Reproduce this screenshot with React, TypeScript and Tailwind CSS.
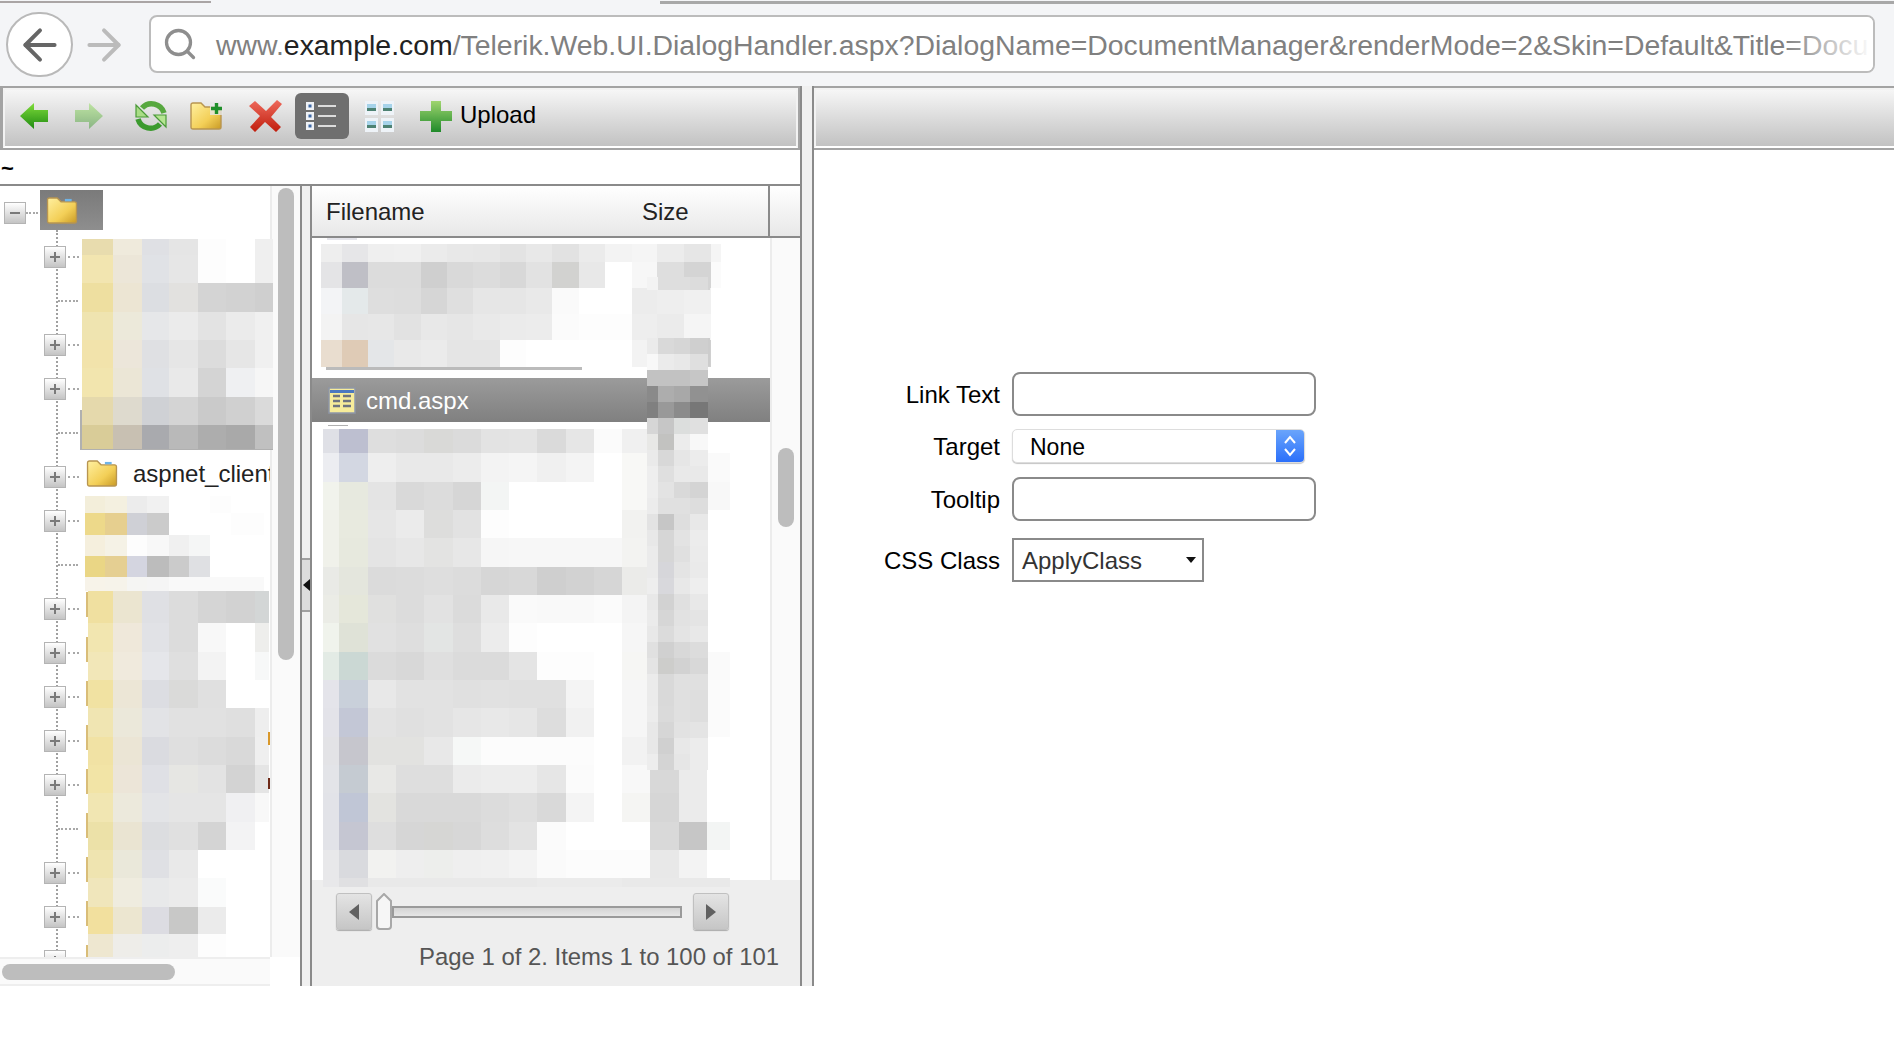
import { ArrowLeft, ArrowRight, Search } from 'lucide-react';
import type { ReactNode } from 'react';

interface MosaicProps {
  cols: number[];
  rows: number[];
  colors: string[];
}

// each colors entry is one row of space separated hex values
function Mosaic({ cols, rows, colors }: MosaicProps) {
  return (
    <div className="flex flex-col shrink-0">
      {rows.map((h, r) => {
        const line = colors[r].split(' ');
        return (
          <div key={r} className="flex">
            {cols.map((w, c) => (
              <div key={c} style={{ width: w, height: h, backgroundColor: '#' + line[c] }} />
            ))}
          </div>
        );
      })}
    </div>
  );
}

const tree1 = {
  cols: [31, 29, 27, 29, 28, 29, 18],
  rows: [16, 28, 29, 28, 28, 29, 28, 24],
  colors: [
    'e8dcae efeadc dfe0e4 e5e5e5 fdfdfd ffffff efefef',
    'f2e5b0 ece6d8 e0e2e6 e6e6e6 fdfdfd ffffff efefef',
    'eedfa0 ece5d3 dcdee2 e2e1df d4d4d4 d2d2d2 cfcfcf',
    'efe4b0 ece9da e6e7e9 ebebeb e3e3e3 ebebeb f0f0f0',
    'f2e3ab ece6da dfe0e3 e6e6e6 dcdcdc e6e6e6 f0f0f0',
    'f2e5ae ebe6d6 dfe1e5 e9e9e9 d4d4d4 eff0f2 f6f6f6',
    'e5d9ac dedace cfd1d5 d4d4d4 cacaca d0d0d0 dadada',
    'd9cc98 c8c0b2 a9aaae b9b9b9 adadad a9a9a9 c0c0c0',
  ],
};

const tree2 = {
  cols: [20, 22, 20, 22, 20, 21, 21, 33],
  rows: [17, 22, 21, 21, 14],
  colors: [
    'f3eeda f4f0e0 ececec f1f1f1 ffffff ffffff fdfdfd ffffff',
    'edd98a e6cf8f cfd0d6 cbcbcb ffffff ffffff ffffff fdfdfd',
    'f5efdd f5f2e6 fdfdfd f8f8f8 f0f0f0 f5f6f6 ffffff ffffff',
    'ead685 e5cf92 d4d5e0 bcbcbc cbcbcb dfe0e3 ffffff ffffff',
    'f7f3e9 f6f3ea f5f5f3 f5f5f5 f9f9f9 f9f9f9 f9f9f9 f9f9f9',
  ],
};

const tree3 = {
  cols: [25, 29, 27, 29, 28, 29, 14],
  rows: [32, 29, 28, 28, 29, 28, 28, 29, 28, 28, 29, 27, 24],
  colors: [
    'f0e0a0 ebe5d0 dfe0e4 dcdcdc d5d5d5 d2d2d2 d3d6d6',
    'f2e6b0 efe8da e1e2e6 dcdcdc f8f8f8 ffffff eeeeec',
    'f2e7b8 f0eadd e5e6ea dfdfdf f3f3f3 ffffff f7f8f8',
    'f1e2a2 ece6d6 dcdde2 dadad9 e0e0e0 ffffff ffffff',
    'f0e5b2 ebe8da e2e3e6 e1e1e1 e1e1e1 dfdfdf eeeeee',
    'f1e2a4 ebe5d5 dadbe0 dfdfdf dcdcdc d9d9d9 efefef',
    'f2e4a6 ece5d8 dfe0e5 e6e6e3 e3e3e3 d3d3d3 e5e5e5',
    'f1e6b2 ece9dc e3e4e7 e5e5e5 e5e5e5 f0f0f2 f8f8f8',
    'ece1a8 eae4d2 dcdde0 e0e0e0 d4d4d4 f3f3f4 ffffff',
    'efe4b0 eae8da dfe0e4 e9e9e9 ffffff ffffff ffffff',
    'f0e6bb efecdf e8e9ea ebebeb fafbfb ffffff ffffff',
    'f2e09e ece6d0 dcdce2 c8c8c7 ebebeb ffffff ffffff',
    'eee7d0 eeede9 ecedEd eeeeee fdfdfd ffffff ffffff',
  ],
};

const files1 = {
  cols: [21, 26, 26, 27, 26, 26, 27, 26, 26, 27, 26, 27, 25, 27, 27, 10],
  rows: [18, 26, 26, 26, 27],
  colors: [
    'eeeeee e6e6e8 efefef f0f0f0 ebebeb e8e8e8 e7e7e7 e3e3e3 e8e8e8 e2e2e2 ebebeb f3f3f3 f5f5f5 ececec e6e6e6 f5f5f5',
    'e4e4e6 bfbfc6 dcdcdc dcdcdc cfcfcf d9d9d9 dcdcdc d8d8d8 e2e2e2 d2d2d0 e8e8e8 ffffff f7f7f7 dedede d4d4d4 fbfbfb',
    'f3f4f6 e4e9ea dedede dddddd d6d6d6 dfdfdf e6e6e6 e6e6e6 e9e9e9 fafafa ffffff ffffff ececec eeeeee f0f0f0 ffffff',
    'f3f3f3 e6e6e6 e7e7e7 e2e2e2 e8e8e8 e6e6e6 e9e9e9 ebebeb ececec fbfbfb fdfdfd fdfdfd eeeeee ebebeb f5f5f5 ffffff',
    'e9ddcf dfcbb6 e4e6e8 e9e9e9 ebebeb e5e5e5 e5e5e5 fdfdfd ffffff ffffff ffffff ffffff f3f3f3 e0e0e0 d0d0d0 ffffff',
  ],
};

const files2 = {
  cols: [16, 29, 28, 28, 29, 28, 28, 28, 29, 28, 28, 28, 29, 28, 23],
  rows: [24, 29, 28, 28, 29, 28, 28, 29, 28, 28, 29, 28, 28, 29, 28, 28, 9],
  colors: [
    'dfe0e6 bdbfd0 dedede dcdcdc d9d9d7 dbdbdb e3e3e3 e4e4e4 dadada e6e6e6 fbfbfb f0f0f0 f0f0f0 f0f0f0 ffffff',
    'ecedf1 d3d7e2 eeeeee e9e9e9 e9e9e9 ececec f3f3f3 f5f5f5 f0f0f0 f4f4f4 ffffff f8f8f6 f0f0f0 f0f0f0 fafafa',
    'f1f3ec e7e9df e4e4e4 d9d9d9 dcdcdc d6d6d6 f3f5f4 ffffff ffffff ffffff ffffff f8f8f6 e0e0e0 e0e0e0 f8f8f8',
    'f0f1ea e8eadf e6e6e6 ebebeb dddddc e2e2e2 fdfdfd ffffff ffffff ffffff ffffff f2f2f0 e0e0e0 e0e0e0 ffffff',
    'f0f1ea e7e9de e4e4e4 e7e7e7 e3e3e2 e7e7e7 f6f6f6 f7f7f7 f7f7f7 f7f7f7 f7f7f7 f3f3f1 e0e0e0 e0e0e0 ffffff',
    'e9eae6 e4e6dd dbdbdb dcdcdc dedede dcdcdc d6d6d6 d8d8d8 cfcfcf d2d2d2 d6d6d6 ebebe9 e0e0e0 e0e0e0 ffffff',
    'ebece6 e5e7da e0e0df dcdcdc e2e2e2 dbdbdb e9e9e9 fafafa f9f9f9 f9f9f9 fbfbfb f4f4f4 e0e0e0 e0e0e0 ffffff',
    'f0f3ec dfe2d7 e1e1e1 dedede e3e5e4 dedede ececec fdfdfd ffffff ffffff ffffff f6f6f6 e0e0e0 e0e0e0 ffffff',
    'e3ebe5 cbd8d4 dbdbdb d8d8d8 dfdfdf dbdbdb dbdbdb e4e4e4 fdfdfd fdfdfd ffffff f6f6f4 e0e0e0 e0e0e0 fafafa',
    'e4e4ea c9d0da e8e8e8 e2e2e2 e2e2e2 e0e0e0 e1e1e1 e0e0e0 e0e0e0 f4f4f4 ffffff f6f6f6 e0e0e0 e0e0e0 fbfbfb',
    'e3e3e9 c3c7d6 e3e3e3 e0e0e0 e2e2e2 e6e6e6 e8e8e8 e6e6e6 dddddd f1f1f1 ffffff f6f6f6 e0e0e0 e0e0e0 fbfbfb',
    'e3e3e6 c6c6cd e2e2e0 e2e2e0 e8e8e8 f6f8f7 fcfcfc fcfcfc fcfcfc fcfcfc ffffff f2f2f2 e0e0e0 e0e0e0 ffffff',
    'e3e4e8 c5cbd2 e8e8e6 dedede dedede ebebeb ededed ededed e6e6e6 fbfbfb ffffff f8f8f8 d8d8d8 ebebeb ffffff',
    'e2e3e8 c0c6d6 e3e3e0 d9d9d9 d9d9d9 d9d9d9 dcdcdc dfdfdf d9d9d9 f4f4f4 ffffff f5f5f3 d6d6d6 ebebeb ffffff',
    'e2e3e8 c5c6d2 dedede d6d6d6 d6d6d4 d7d7d7 dddddd e3e3e3 fbfbfb ffffff ffffff ffffff d9d9d9 c6c6c6 f3f5f4',
    'e8e8ea d9dade f2f2f0 eeeeee edeeec efefef f0f0f0 f3f3f3 fafafa fcfcfc fcfcfc fcfcfc e8e8e8 f3f3f3 ffffff',
    'e8e8ea e0e0e2 e9e9e9 e9e9e9 e9e9e9 e9e9e9 e9e9e9 e9e9e9 ebebeb ebebeb ebebeb e9e9e9 e9e9e9 e9e9e9 e9e9e9',
  ],
};

const sizeTop = ['f3f3f3 dedede dedede dcdcdc'];

const sizeCol = [
  'ebebeb d9d9d9 d6d6d6 cfcfcf',
  'f8f8f8 ebebeb e8e8e8 dfdfdf',
  'c2c2c2 c2c2c2 c2c2c2 c6c6c6',
  '8a8a8a adadad a8a8a8 919191',
  '808080 999999 8b8b8b 777777',
  'd6d6d6 c6c6c6 dcdedd e0e0e0',
  'e8e8e6 c2c2c0 ececec f8f8f8',
  'eaeaea d8d8d8 e6e6e6 ececec',
  'eeeeee dfdfdf e9e9e9 e9e9e9',
  'eeeeee e3e3e3 d9d9d9 d4d4d4',
  'ececec e0e0e0 e0e0e0 dddddd',
  'e3e3e3 c6c6c6 dedede e8e8e8',
  'e8e8e8 d6d6d6 e3e3e3 ececec',
  'ebebeb d6d6d6 e0e0e0 ebebeb',
  'ebebeb d6d6da e4e4e4 eaeaea',
  'eeeeee d8d8dc e8e8e8 eeeeee',
  'e8e8e8 d2d2d2 e0e0e0 e8e8e8',
  'ebebeb d6d6d6 e2e2e2 e4e4e4',
  'e8e8e8 dbdbdb e4e4e4 e8e8e8',
  'e0e0e0 d0d0d0 d8d8d8 dcdcdc',
  'e4e4e4 cdcdcb d2d2d2 d8d8d8',
  'ebebeb d9d9d9 e0e0e0 e0e0e0',
  'ebebeb d9d9d9 e0e0e0 dedede',
  'ececec dadada e0e0e0 dedede',
  'e8e8e8 d6d6d6 e2e2e2 e4e4e4',
  'e8e8e8 d0d0d0 e8e8e8 ececec',
  'ededed d4d4d4 e6e6e6 ececec',
];

const sizeCols = [11, 16, 16, 18];

// tops of the folder edges that peek out left of the third blurred block
const folderEdges = [1, 46, 90, 134, 178, 222, 266, 310, 354];

function GreenArrow({ flip }: { flip?: boolean }) {
  const id = flip ? 'arrowB' : 'arrowA';
  return (
    <svg width="28" height="26" viewBox="0 0 28 26" className={`blur-[0.6px] ${flip ? 'opacity-40 -scale-x-100' : ''}`}>
      <defs>
        <linearGradient id={id} x1="0" y1="0" x2="0" y2="1">
          <stop offset="0" stopColor="#7fdc3a" />
          <stop offset="1" stopColor="#1f8a12" />
        </linearGradient>
      </defs>
      <path d="M0 13 L14 0 V7 H28 V19 H14 V26 Z" fill={`url(#${id})`} />
    </svg>
  );
}

function RefreshIcon() {
  return (
    <svg width="32" height="32" viewBox="0 0 32 32" className="blur-[0.6px]">
      <path d="M7 8 A13 13 0 0 1 29 13" fill="none" stroke="#57a83f" strokeWidth="5.5" />
      <path d="M25 24 A13 13 0 0 1 3 19" fill="none" stroke="#3b9a2e" strokeWidth="5.5" />
      <path d="M1 5 V17 H13 Z" fill="#a9dd86" stroke="#4a9a38" strokeWidth="1.2" />
      <path d="M31 27 V15 H19 Z" fill="#b5e592" stroke="#4a9a38" strokeWidth="1.2" />
    </svg>
  );
}

function FolderShape({ id }: { id: string }) {
  return (
    <>
      <defs>
        <linearGradient id={id} x1="0" y1="0" x2="1" y2="1">
          <stop offset="0" stopColor="#fff0a0" />
          <stop offset="0.6" stopColor="#f3cf57" />
          <stop offset="1" stopColor="#c99a25" />
        </linearGradient>
      </defs>
      <path d="M1 3 Q1 1 3 1 H11 L15 5 H29 Q31 5 31 7 V25 Q31 27 29 27 H3 Q1 27 1 25 Z" fill={`url(#${id})`} stroke="#b89550" strokeWidth="1.4" />
    </>
  );
}

function NewFolderIcon() {
  return (
    <svg width="33" height="29" viewBox="0 0 33 29" className="blur-[0.4px]">
      <FolderShape id="folderNew" />
      <rect x="20" y="0" width="13" height="13" fill="#e6e6e6" opacity="0.8" />
      <path d="M26.5 1 V12 M21 6.5 H32" stroke="#1f8f2a" strokeWidth="3.4" />
    </svg>
  );
}

function DeleteIcon() {
  return (
    <svg width="33" height="32" viewBox="0 0 33 32" className="blur-[0.6px]">
      <defs>
        <linearGradient id="delRed" x1="0" y1="0" x2="0" y2="1">
          <stop offset="0" stopColor="#ee6a5c" />
          <stop offset="1" stopColor="#c01d0c" />
        </linearGradient>
      </defs>
      <path d="M0 6 L6 1 L17 11 L28 0 L33 4 L22 17 L32 27 L27 32 L16 22 L6 32 L1 27 L11 16 Z" fill="url(#delRed)" />
    </svg>
  );
}

function ListIcon() {
  return (
    <svg width="32" height="30" viewBox="0 0 32 30" className="blur-[0.3px]">
      {[1, 11, 21].map((y) => (
        <g key={y}>
          <rect x="0" y={y} width="8" height="8" fill="#eef1f6" />
          <rect x="2.5" y={y + 2.5} width="3" height="3" fill="#3d68a5" />
          <rect x="12" y={y + 3} width="18" height="2" fill="#dcdcdc" />
        </g>
      ))}
    </svg>
  );
}

function ThumbsIcon() {
  return (
    <svg width="30" height="31" viewBox="0 0 30 31" className="blur-[0.4px]">
      {[0, 16].map((x) =>
        [0, 17].map((y) => (
          <g key={`${x}-${y}`}>
            <rect x={x} y={y} width="13" height="14" fill="#eef3f8" />
            <rect x={x + 2} y={y + 3} width="9" height="4" fill="#a6d3ea" />
            <rect x={x + 2} y={y + 7} width="9" height="3" fill="#4d8273" />
          </g>
        )),
      )}
    </svg>
  );
}

function UploadIcon() {
  return (
    <svg width="32" height="31" viewBox="0 0 32 31" className="blur-[0.5px]">
      <defs>
        <linearGradient id="plusGreen" x1="0" y1="0" x2="0" y2="1">
          <stop offset="0" stopColor="#a0d56f" />
          <stop offset="1" stopColor="#1f8a2a" />
        </linearGradient>
      </defs>
      <path d="M11 0 H21 V10 H32 V20 H21 V31 H11 V20 H0 V10 H11 Z" fill="url(#plusGreen)" />
    </svg>
  );
}

function TreeBox({ open }: { open?: boolean }) {
  return (
    <div className="w-[22px] h-[22px] shrink-0 flex items-center justify-center bg-linear-to-b from-white to-[#c4c4c4] border border-[#b4b4b4]">
      <svg width="12" height="12" viewBox="0 0 12 12">
        <path d={open ? 'M1 6 H11' : 'M1 6 H11 M6 1 V11'} stroke="#7a7a7a" strokeWidth="2" />
      </svg>
    </div>
  );
}

function Dots({ w }: { w: number }) {
  return <div style={{ width: w }} className="border-t-2 border-dotted border-[#a8a8a8]" />;
}

// which tree rows have an expander
const treeRows = [1, 0, 1, 1, 0, 1, 1, 0, 1, 1, 1, 1, 1, 0, 1, 1, 1];

function TreeLines() {
  return (
    <div className="relative w-[82px] shrink-0 pt-[5px]">
      <div className="absolute left-[56px] top-0 bottom-0 border-l-2 border-dotted border-[#a0a0a0]" />
      {treeRows.map((plus, i) => (
        <div key={i} className="relative h-[44px] flex items-center">
          {plus ? (
            <div className="flex items-center ml-[44px] gap-[2px]">
              <TreeBox />
              <Dots w={11} />
            </div>
          ) : (
            <div className="ml-[58px]">
              <Dots w={20} />
            </div>
          )}
        </div>
      ))}
    </div>
  );
}

function ArrowButton({ left }: { left?: boolean }) {
  return (
    <div className="w-[36px] h-[37px] flex items-center justify-center rounded-[3px] bg-linear-to-b from-[#e4e4e4] to-[#c6c6c6] border border-[#c0c0c0] shadow-[0_1px_1px_#aaa]">
      <svg width="12" height="16" viewBox="0 0 12 16">
        <path d={left ? 'M11 0 V16 L1 8 Z' : 'M1 0 V16 L11 8 Z'} fill="#616161" />
      </svg>
    </div>
  );
}

function FormRow({ label, top, children }: { label: string; top: string; children: ReactNode }) {
  return (
    <div className={`flex items-center ${top}`}>
      <div className="w-[186px] shrink-0 pt-[2px] text-right text-[24px] leading-[30px] text-black">{label}</div>
      <div className="ml-[12px]">{children}</div>
    </div>
  );
}

export default function App() {
  return (
    <div className="w-[1894px] h-[1048px] overflow-hidden bg-white font-['Liberation_Sans',sans-serif]">
      {/* Browser bar */}
      <div className="relative h-[86px] bg-[#f4f5f7] flex items-start">
        <div className="absolute left-0 top-[1px] w-[211px] h-[2px] bg-[#aaa5a5]" />
        <div className="absolute left-[660px] right-0 top-[1px] h-[3px] bg-[#a8a8a8]" />
        <div className="ml-[6px] mt-[12px] w-[67px] h-[65px] rounded-full border-2 border-[#b9b9b9] bg-white flex items-center justify-center">
          <ArrowLeft size={50} strokeWidth={1.9} className="text-[#666666]" />
        </div>
        <ArrowRight size={50} strokeWidth={1.9} className="ml-[6px] mt-[20px] text-[#bbbbbb]" />
        <div className="ml-[20px] mt-[15px] w-[1726px] h-[58px] rounded-lg border-2 border-[#bcbcbc] bg-white flex items-center relative overflow-hidden">
          <Search size={36} strokeWidth={2.2} className="ml-[11px] shrink-0 text-[#8e8e8e]" />
          <div className="ml-[18px] pt-[2px] whitespace-nowrap text-[28.4px] text-[#808080]">
            www.<span className="text-[#222222]">example.com</span>/Telerik.Web.UI.DialogHandler.aspx?DialogName=DocumentManager&amp;renderMode=2&amp;Skin=Default&amp;Title=Docu
          </div>
          <div className="absolute right-0 top-0 bottom-0 w-[90px] bg-linear-to-r from-transparent to-white" />
        </div>
      </div>

      <div className="flex h-[900px]">
        {/* File browser */}
        <div className="w-[802px] shrink-0 border-r-2 border-[#8a8a8a] flex flex-col">
          <div className="h-[64px] shrink-0 border-t-2 border-b-2 border-l-[3px] border-r-2 border-[#a3a3a3]">
            <div className="h-full pl-[15px] pb-[4px] flex items-center border-2 border-[#f2f2f2] border-b-white bg-linear-to-b from-[#f6f6f6] to-[#c2c2c2]">
              <GreenArrow />
              <div className="ml-[27px]">
                <GreenArrow flip />
              </div>
              <div className="ml-[32px]">
                <RefreshIcon />
              </div>
              <div className="ml-[23px]">
                <NewFolderIcon />
              </div>
              <div className="ml-[26px]">
                <DeleteIcon />
              </div>
              <div className="ml-[13px] w-[54px] h-[46px] rounded-md bg-[#6f6f6f] flex items-center justify-center">
                <ListIcon />
              </div>
              <div className="ml-[16px]">
                <ThumbsIcon />
              </div>
              <div className="ml-[25px]">
                <UploadIcon />
              </div>
              <span className="ml-[8px] mb-[2px] text-[24px] text-black">Upload</span>
            </div>
          </div>

          <div className="h-[36px] shrink-0 border-b-2 border-[#8a8a8a] pl-[1px] text-[22px] font-bold leading-[38px] text-black">~</div>

          <div className="flex flex-1 min-h-0">
            {/* Folder tree */}
            <div className="w-[300px] shrink-0 flex flex-col">
              <div className="flex h-[771px] overflow-hidden">
                <div className="relative z-10 w-[270px] shrink-0">
                  <div className="flex items-start h-[44px] pt-[4px] pl-[4px]">
                    <div className="flex items-center mt-[12px]">
                      <TreeBox open />
                      <Dots w={12} />
                    </div>
                    <div className="ml-[2px] w-[63px] h-[40px] bg-linear-to-b from-[#7a7a7a] to-[#8e8e8e] flex items-center pl-[6px]">
                      <svg width="32" height="27" viewBox="0 0 32 28">
                        <FolderShape id="folderRoot" />
                        <rect x="19" y="2" width="7" height="2.5" fill="#6fb4e8" />
                      </svg>
                    </div>
                  </div>
                  <div className="flex">
                    <TreeLines />
                    <div className="flex flex-col pt-[9px]">
                      <div className="relative">
                        <Mosaic {...tree1} />
                        <div className="absolute left-[-2px] top-[171px] w-[2px] h-[40px] bg-[#b0b0b0]" />
                        <div className="absolute left-[-2px] right-0 top-[210px] h-[1px] bg-[#b0b0b0]" />
                      </div>
                      <div className="h-[47px] w-[184px] overflow-hidden flex items-center ml-[4px] pt-[2px] whitespace-nowrap">
                        <svg width="32" height="27" viewBox="0 0 32 28" className="shrink-0">
                          <FolderShape id="folderAspnet" />
                          <rect x="19" y="2" width="7" height="2.5" fill="#6fb4e8" />
                        </svg>
                        <span className="ml-[15px] text-[24px] text-[#222222]">aspnet_client</span>
                      </div>
                      <div className="ml-[3px]">
                        <Mosaic {...tree2} />
                      </div>
                      <div className="relative ml-[6px]">
                        <Mosaic {...tree3} />
                        {folderEdges.map((y) => (
                          <div key={y} style={{ top: y }} className="absolute left-[-2px] w-[2px] h-[25px] bg-[#d9bd78]" />
                        ))}
                        <div className="absolute left-[180px] top-[141px] w-[2px] h-[13px] bg-[#d9982a]" />
                        <div className="absolute left-[180px] top-[187px] w-[2px] h-[11px] bg-[#6e2a18]" />
                      </div>
                    </div>
                  </div>
                </div>
                <div className="flex-1 border-l-2 border-[#ececec] bg-[#fafafa] pl-[6px] pt-[2px]">
                  <div className="w-[16px] h-[472px] rounded-full bg-[#bdbdbd]" />
                </div>
              </div>
              <div className="w-[270px] h-[29px] bg-[#fafafa] border-t-2 border-b-2 border-[#eeeeee] pl-[2px] pt-[5px]">
                <div className="w-[173px] h-[16px] rounded-full bg-[#bdbdbd]" />
              </div>
            </div>

            {/* Splitter */}
            <div className="w-[12px] shrink-0 border-x-2 border-[#8a8a8a] bg-[#f0f0f0] pt-[372px]">
              <div className="h-[54px] border-y-2 border-[#a0a0a0] bg-[#dddddd] flex items-center justify-end">
                <svg width="7" height="12" viewBox="0 0 7 12">
                  <path d="M7 0 V12 L0 6 Z" fill="#111111" />
                </svg>
              </div>
            </div>

            {/* File list */}
            <div className="flex-1 min-w-0 flex flex-col">
              <div className="h-[52px] shrink-0 flex border-b-2 border-[#8a8a8a] bg-linear-to-b from-white to-[#e8e8e8] text-[24px] text-[#222222]">
                <div className="w-[330px] pl-[14px] leading-[52px]">Filename</div>
                <div className="w-[128px] leading-[52px] border-r-2 border-[#8a8a8a]">Size</div>
              </div>
              <div className="h-[642px] shrink-0 flex">
                <div className="relative z-10 w-[458px] shrink-0">
                  <div className="absolute left-[15px] top-0 w-[30px] h-[2px] bg-[#e4e4ea]" />
                  <div className="pt-[6px] pl-[9px]">
                    <Mosaic {...files1} />
                  </div>
                  <div className="ml-[14px] w-[256px] h-[3px] bg-[#bbbbbb]" />
                  <div className="mt-[8px] h-[44px] flex items-center pl-[16px] bg-linear-to-b from-[#9b9b9b] to-[#808080]">
                    <svg width="28" height="27" viewBox="0 0 28 27" className="blur-[0.4px]">
                      <rect x="1" y="1" width="26" height="25" fill="#f7ec9a" stroke="#8e97a8" strokeWidth="1.5" />
                      <rect x="2" y="3" width="24" height="3" fill="#4b78c0" />
                      <path d="M5 9 H12 M5 14 H12 M5 19 H12 M15 9 H23 M15 14 H23 M15 19 H23" stroke="#6f7480" strokeWidth="2.5" />
                    </svg>
                    <span className="ml-[10px] pt-[2px] text-[24px] text-white">cmd.aspx</span>
                  </div>
                  <div className="ml-[16px] mt-[3px] w-[20px] h-[1px] bg-[#b0b0b0]" />
                  <div className="pt-[3px] pl-[11px]">
                    <Mosaic {...files2} />
                  </div>
                  <div className="absolute left-[335px] top-[39px]">
                    <Mosaic cols={sizeCols} rows={[13]} colors={sizeTop} />
                  </div>
                  <div className="absolute left-[396px] top-[39px] w-[2px] h-[13px] bg-[#d4d4d4]" />
                  <div className="absolute left-[396px] top-[100px] w-[2px] h-[28px] bg-[#cccccc]" />
                  <div className="absolute left-[335px] top-[100px]">
                    <Mosaic cols={sizeCols} rows={sizeCol.map(() => 16)} colors={sizeCol} />
                  </div>
                </div>
                <div className="flex-1 border-l-2 border-[#ececec] bg-[#fafafa] pl-[6px] pt-[210px]">
                  <div className="w-[16px] h-[79px] rounded-full bg-[#bdbdbd]" />
                </div>
              </div>
              <div className="flex-1 bg-[#eeeeee] pt-[13px] pl-[24px] pr-[21px]">
                <div className="flex items-center">
                  <ArrowButton left />
                  <svg width="16" height="37" viewBox="0 0 16 37" className="ml-[4px]">
                    <path d="M1 8 L8 1 L15 8 V33 Q15 36 12 36 H4 Q1 36 1 33 Z" fill="#f6f6f6" stroke="#a8a8a8" strokeWidth="2" />
                  </svg>
                  <div className="w-[290px] h-[12px] border-2 border-[#9a9a9a] bg-linear-to-b from-[#d4d4d4] to-[#e6e6e6]" />
                  <div className="ml-[11px]">
                    <ArrowButton />
                  </div>
                </div>
                <div className="mt-[11px] text-right text-[23.9px] leading-[32px] text-[#555555]">Page 1 of 2. Items 1 to 100 of 101</div>
              </div>
            </div>
          </div>
        </div>

        {/* Gap between panes */}
        <div className="w-[10px] shrink-0 bg-[#f0f0f0]" />
        <div className="w-[2px] shrink-0 bg-[#8a8a8a]" />

        {/* Link properties */}
        <div className="flex-1 min-w-0">
          <div className="h-[64px] border-y-2 border-[#a3a3a3]">
            <div className="h-full border-2 border-[#f2f2f2] border-b-white border-r-0 bg-linear-to-b from-[#f6f6f6] to-[#c2c2c2]" />
          </div>
          <FormRow label="Link Text" top="mt-[222px]">
            <input readOnly className="block w-[304px] h-[44px] rounded-[8px] border-2 border-[#8a8a8a] bg-white" />
          </FormRow>
          <FormRow label="Target" top="mt-[13px]">
            <div className="w-[293px] h-[34px] flex items-center rounded-[5px] border border-[#dddddd] bg-white shadow-[0_1px_1px_#c4c4c4] overflow-hidden">
              <span className="flex-1 pl-[17px] pt-[1px] text-[23px] leading-[30px] text-black">None</span>
              <div className="w-[28px] h-full flex items-center justify-center bg-linear-to-b from-[#6aa4fb] to-[#2b6ffa]">
                <svg width="16" height="26" viewBox="0 0 16 26" fill="none" stroke="white" strokeWidth="2">
                  <path d="M3 10 L8 4 L13 10 M3 16 L8 22 L13 16" />
                </svg>
              </div>
            </div>
          </FormRow>
          <FormRow label="Tooltip" top="mt-[14px]">
            <input readOnly className="block w-[304px] h-[44px] rounded-[8px] border-2 border-[#8a8a8a] bg-white" />
          </FormRow>
          <FormRow label="CSS Class" top="mt-[17px]">
            <div className="w-[192px] h-[44px] flex items-center justify-between border-2 border-[#8a8a8a] bg-white pl-[8px] pr-[6px]">
              <span className="pt-[1px] text-[24px] text-[#333333]">ApplyClass</span>
              <svg width="10" height="6" viewBox="0 0 10 6">
                <path d="M0 0 H10 L5 6 Z" fill="#111111" />
              </svg>
            </div>
          </FormRow>
        </div>
      </div>
    </div>
  );
}
